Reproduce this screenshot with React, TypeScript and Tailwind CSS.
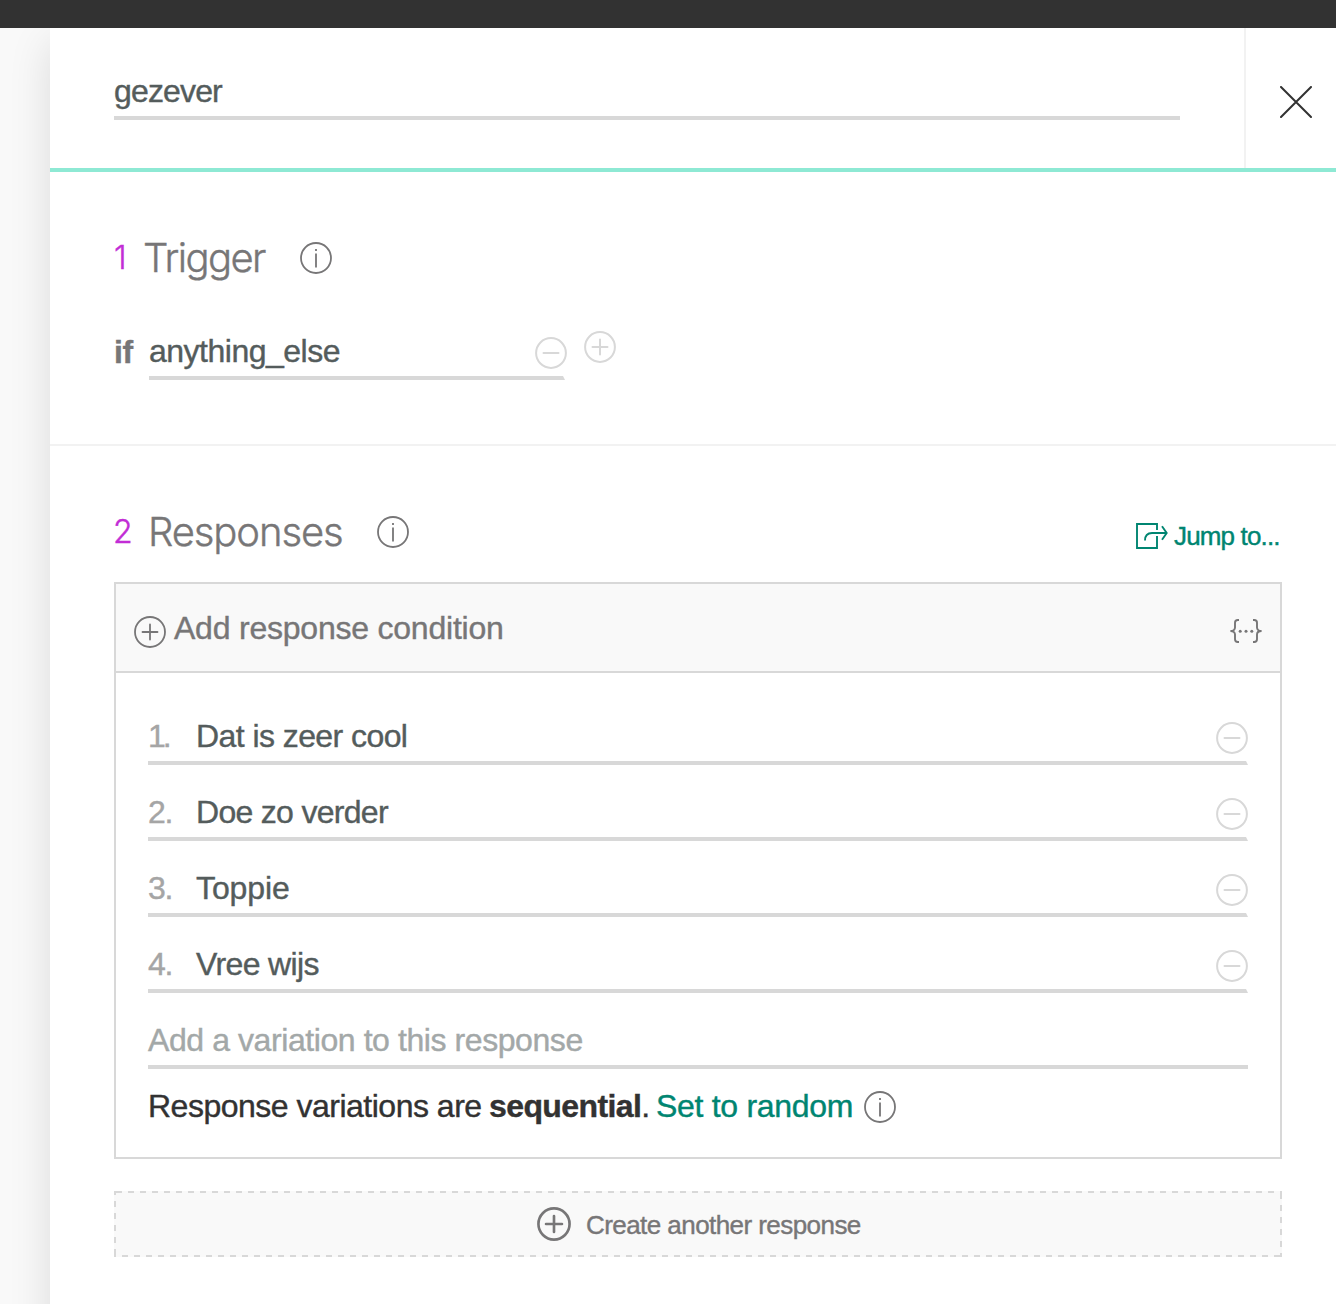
import React from "react";

type IconProps = { className?: string; stroke?: number };

function CircleIcon({ className = "", stroke = 2, children }: IconProps & { children?: React.ReactNode }) {
  return (
    <svg viewBox="0 0 32 32" fill="none" stroke="currentColor" strokeWidth={stroke} className={`shrink-0 ${className}`}>
      <circle cx="16" cy="16" r={16 - stroke / 2 - 0.1} />
      {children}
    </svg>
  );
}

function MinusIcon(props: IconProps) {
  return (
    <CircleIcon {...props}>
      <path d="M8.5 16h15" strokeLinecap="round" />
    </CircleIcon>
  );
}

function PlusIcon(props: IconProps) {
  return (
    <CircleIcon {...props}>
      <path d="M8.5 16h15M16 8.5v15" strokeLinecap="round" />
    </CircleIcon>
  );
}

function InfoIcon(props: IconProps) {
  return (
    <CircleIcon stroke={1.8} {...props}>
      <path d="M16 11.5v14M16 7v2" />
    </CircleIcon>
  );
}

function JumpIcon() {
  return (
    <svg viewBox="0 0 32 26" fill="none" stroke="currentColor" strokeWidth="1.9" className="h-[26px] w-8 shrink-0">
      <path d="M21 7V1H1v24h20V13" />
      <path d="M9 17.5C8.8 12.8 11.5 10 16 10h14.5" />
      <path d="M26 3.2l4.7 6.8-4.7 6.8" />
    </svg>
  );
}

function BracesIcon() {
  return (
    <svg viewBox="0 0 32 24" fill="none" stroke="currentColor" strokeWidth="1.9" className="h-6 w-8 shrink-0">
      <path d="M9 1H7.8C6 1 5 2 5 3.7v4.8C5 10.5 3.5 12 .4 12 3.500 12 5 13.5 5 15.5v4.8C5 22 6 23 7.8 23H9" />
      <path d="M23 1h1.2C26 1 27 2 27 3.7v4.8c0 2 1.5 3.500 4.6 3.5-3.100 0-4.600 1.500-4.600 3.500v4.800c0 1.700-1 2.700-2.800 2.700H23" />
      <g fill="currentColor" stroke="none">
        <circle cx="10.2" cy="12.2" r="1.5" />
        <circle cx="16" cy="12.2" r="1.5" />
        <circle cx="21.8" cy="12.2" r="1.5" />
      </g>
    </svg>
  );
}

const responses = [
  { text: "Dat is zeer cool", num: "tracking-[-3px]", cls: "tracking-[-0.57px]" },
  { text: "Doe zo verder", num: "tracking-[-1.2px]", cls: "tracking-[-0.7px]" },
  { text: "Toppie", num: "tracking-[-1.2px]", cls: "tracking-[-0.1px]" },
  { text: "Vree wijs", num: "tracking-[-1.2px]", cls: "tracking-[-0.65px]" },
];

export default function App() {
  return (
    <div className="flex h-[1304px] w-[1336px] flex-col overflow-hidden bg-[#f9f9f9] font-['Liberation_Sans',Arial,sans-serif] text-[32px] leading-8 whitespace-nowrap [-webkit-text-stroke:0.4px_currentColor]">
      <div className="h-7 shrink-0 bg-[#323232]" />
      <div className="h-[1276px] overflow-hidden pl-[50px]">
        <main className="h-[1400px] bg-white shadow-[0_14px_40px_rgba(0,0,0,0.12)]">
          <header className="flex h-36 border-b-4 border-[#8ee9d4]">
            <div className="w-[1194px] pt-[47px] pl-16">
              <div className="h-[45px] w-[1066px] border-b-4 border-[#d8d8d8] tracking-[-0.85px] text-[#545c5c]">gezever</div>
            </div>
            <button className="flex flex-1 items-start border-l-2 border-[#f2f2f2] pt-[58px] pl-[34px] text-[#323232]">
              <svg viewBox="0 0 32 32" fill="none" stroke="currentColor" strokeWidth="2" strokeLinecap="round" className="size-8">
                <path d="M1 1l30 30M31 1L1 31" />
              </svg>
            </button>
          </header>

          <section className="h-[274px] border-b-2 border-[#f2f2f2] pl-16">
            <div className="flex h-[159px] items-start pt-[65px] text-[#777677]">
              <span className="mt-[5px] w-[29px] font-['Inter',sans-serif] font-light text-[#c22dd5]">1</span>
              <h2 className="mt-px w-[157px] font-['Inter',sans-serif] text-[40px] leading-10 font-light tracking-[-1.6px]">Trigger</h2>
              <InfoIcon className="mt-[5px] size-8" />
            </div>
            <div className="flex items-start">
              <span className="mt-[5px] w-[35px] font-bold tracking-[-0.5px] text-[#777677]">if</span>
              <div className="mt-1 flex h-[45px] w-[416px] border-b-4 border-[#d8d8d8] [border-right:2px_solid_transparent]">
                <span className="w-[386px] shrink-0 tracking-[-0.5px] text-[#545c5c]">anything_else</span>
                <MinusIcon className="mt-0.5 size-8 text-[#d8d8d8]" />
              </div>
              <PlusIcon className="ml-[19px] size-8 text-[#d8d8d8]" />
            </div>
          </section>

          <section className="pr-[54px] pl-16">
            <div className="flex h-[136px] items-start pt-[65px] text-[#777677]">
              <span className="-ml-px mt-[5px] w-[35px] font-['Inter',sans-serif] font-light text-[#c22dd5]">2</span>
              <h2 className="mt-px w-[229px] font-['Inter',sans-serif] text-[40px] leading-10 font-light tracking-[-1.1px]">Responses</h2>
              <InfoIcon className="mt-[5px] size-8" />
              <a className="mt-3 ml-auto flex w-[146px] gap-1.5 text-[26px] leading-[26px] tracking-[-0.85px] text-[#008571]">
                <JumpIcon />
                Jump to...
              </a>
            </div>

            <div className="h-[577px] border-2 border-[#d8d8d8]">
              <div className="flex h-[89px] items-start border-b-2 border-[#d8d8d8] bg-[#f9f9f9] pr-[18px] pl-[18px] text-[#777677]">
                <PlusIcon stroke={1.8} className="mt-8 size-8" />
                <span className="mt-7 ml-2 tracking-[-0.22px]">Add response condition</span>
                <span className="mt-[35px] ml-auto">
                  <BracesIcon />
                </span>
              </div>
              <div className="px-8 pt-[47px]">
                {responses.map((r, i) => (
                  <div key={r.text} className="mb-[31px] flex h-[45px] border-b-4 border-[#d8d8d8] [border-right:2px_solid_transparent]">
                    <span className={`w-12 shrink-0 text-[#a5a5a5] ${r.num}`}>{i + 1}.</span>
                    <span className={`w-[1020px] shrink-0 text-[#545c5c] ${r.cls}`}>{r.text}</span>
                    <MinusIcon className="mt-0.5 size-8 text-[#d8d8d8]" />
                  </div>
                ))}
                <div className="h-[45px] border-b-4 border-[#d8d8d8] tracking-[-0.42px] text-[#a3a8a8]">Add a variation to this response</div>
                <p className="mt-[21px] flex text-[#323232]">
                  <span className="w-[341px] tracking-[-0.5px]">Response variations are</span>
                  <span className="w-[167px] tracking-[-0.6px]"><b>sequential</b>.</span>
                  <a className="w-[208px] tracking-[-0.3px] text-[#008571]">Set to random</a>
                  <InfoIcon className="mt-px size-8 text-[#777677]" />
                </p>
              </div>
            </div>

            <button className="mt-8 flex h-[66px] w-full items-start bg-[#f9f9f9] bg-[linear-gradient(90deg,#d8d8d8_6px,transparent_6px),linear-gradient(90deg,#d8d8d8_6px,transparent_6px),linear-gradient(180deg,#d8d8d8_6px,transparent_6px),linear-gradient(180deg,#d8d8d8_6px,transparent_6px)] [background-position:2px_0,8px_100%,0_10px,100%_2px] [background-repeat:repeat-x,repeat-x,repeat-y,repeat-y] [background-size:12px_2px,12px_2px,2px_12px,2px_12px] pt-4 pl-[423px] text-[26px] leading-[26px] tracking-[-0.56px] text-[#777677]">
              <PlusIcon stroke={2.5} className="size-[34px]" />
              <span className="mt-[5px] ml-[15px]">Create another response</span>
            </button>
          </section>
        </main>
      </div>
    </div>
  );
}
